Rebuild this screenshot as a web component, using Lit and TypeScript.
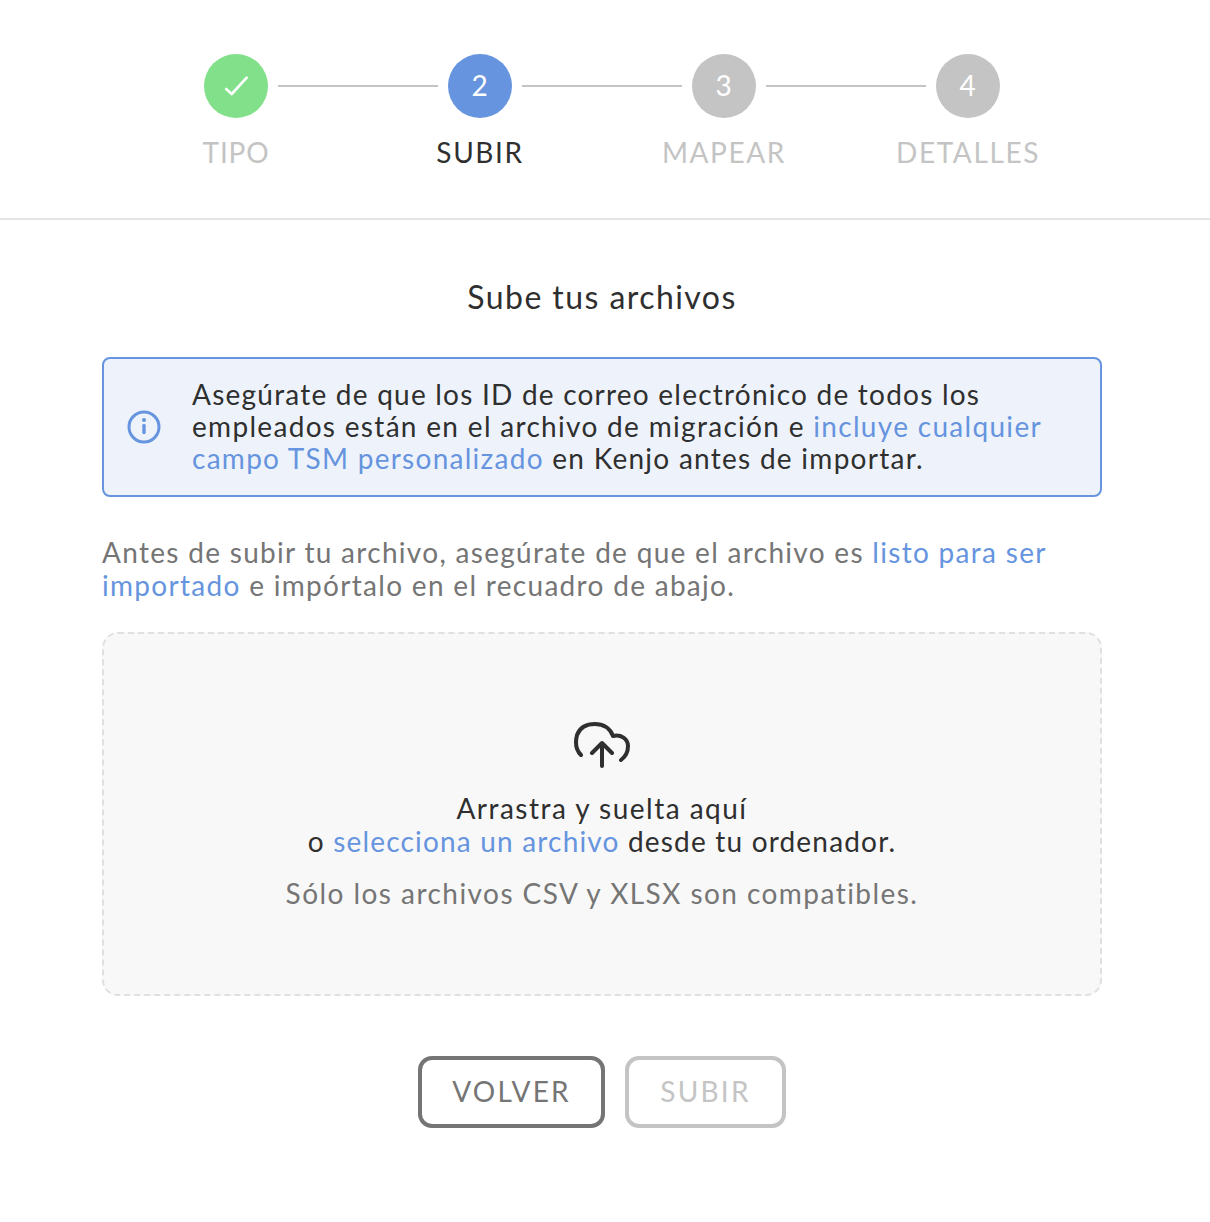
import { LitElement, html, css } from "lit";
import { customElement } from "lit/decorators.js";

@customElement("app-root")
export class AppRoot extends LitElement {
  static styles = css`
    :host { display: block; width: 1210px; height: 1222px; background: #fff; font-family: "Lato", "Noto Sans", sans-serif; color: #2f2f2f; overflow: hidden; }
    .stepper { display: flex; flex-direction: column; align-items: center; padding: 54px 6px 0 0; height: 164px; box-sizing: content-box; border-bottom: 2px solid #e4e4e4; }
    .track { display: flex; align-items: center; gap: 10px; }
    .circle { width: 64px; height: 64px; border-radius: 50%; background: #c4c4c4; color: #fff; display: flex; align-items: center; justify-content: center; font-size: 28px; padding: 0 1px 2px 0; box-sizing: border-box; }
    .circle.done { background: #82e08a; padding: 0; }
    .circle.active { background: #6694de; }
    .line { width: 160px; height: 2px; background: #c4c4c4; }
    .labels { display: grid; grid-template-columns: repeat(4, 244px); margin-top: 18px; }
    .label { text-align: center; font-size: 28px; line-height: 32px; letter-spacing: 1.6px; color: #c4c4c4; }
    .label.tipo { letter-spacing: 0.8px; }
    .label.active { color: #2f2f2f; }
    main { width: 1000px; margin: 0 auto; position: relative; left: -3px; display: flex; flex-direction: column; }
    h1 { margin: 59px 0 0; font-weight: 400; font-size: 32px; line-height: 36px; letter-spacing: 1.43px; text-align: center; }
    .alert { margin-top: 42px; height: 140px; box-sizing: border-box; border: 2px solid #6694de; border-radius: 8px; background: #eef3fb; display: flex; align-items: center; padding: 0 23px; gap: 31px; }
    .alert svg { flex: none; }
    .alert p { margin: 0 0 2px; font-size: 28px; line-height: 32px; letter-spacing: 1.22px; white-space: nowrap; }
    .wide { letter-spacing: 1.31px; }
    .mid { letter-spacing: 1.27px; }
    a { color: #6694de; text-decoration: none; }
    .intro { margin: 39px 0 0; font-size: 28px; line-height: 33px; letter-spacing: 1.3px; color: #757575; white-space: nowrap; }
    .drop { margin-top: 30px; height: 364px; box-sizing: border-box; border: 2px dashed #e0e0e0; border-radius: 16px; background: #f8f8f8; display: flex; flex-direction: column; align-items: center; padding-top: 87px; }
    .drop p { margin: 0; text-align: center; font-size: 28px; line-height: 33px; }
    .drop .l1 { margin-top: 23px; letter-spacing: 1.48px; }
    .l2 { letter-spacing: 1.18px; }
    .drop .hint { margin-top: 19px; color: #757575; letter-spacing: 1.45px; }
    .actions { display: flex; justify-content: center; gap: 20px; margin-top: 60px; }
    button { height: 72px; box-sizing: border-box; background: #fff; border-radius: 14px; border: 4px solid #757575; color: #757575; font: inherit; font-size: 28px; letter-spacing: 2.2px; padding: 0 0 2px; }
    .back { width: 187px; }
    .next { width: 161px; border-color: #c4c4c4; color: #c4c4c4; }
  `;

  render() {
    return html`
      <section class="stepper">
        <div class="track">
          <div class="circle done">
            <svg width="28" height="28" viewBox="0 0 28 28" fill="none" stroke="#fff" stroke-width="2.6" stroke-linecap="round" stroke-linejoin="round"><path d="M4.2 17 L9.7 22 L24.7 5.7" /></svg>
          </div>
          <div class="line"></div>
          <div class="circle active">2</div>
          <div class="line"></div>
          <div class="circle">3</div>
          <div class="line"></div>
          <div class="circle">4</div>
        </div>
        <div class="labels">
          <div class="label tipo">TIPO</div>
          <div class="label active">SUBIR</div>
          <div class="label">MAPEAR</div>
          <div class="label">DETALLES</div>
        </div>
      </section>
      <main>
        <h1>Sube tus archivos</h1>
        <div class="alert">
          <svg width="34" height="34" viewBox="0 0 34 34" fill="none" stroke="#6694de" stroke-width="3"><circle cx="17" cy="17" r="15" /><path d="M17 15.5 V22.5" stroke-width="3.4" stroke-linecap="round" /><circle cx="17" cy="10" r="2" fill="#6694de" stroke="none" /></svg>
          <p>Asegúrate de que los ID de correo electrónico de todos los<br /><span class="wide">empleados están en el archivo de migración e <a>incluye cualquier</a></span><br /><span class="mid"><a>campo TSM personalizado</a> en Kenjo antes de importar.</span></p>
        </div>
        <p class="intro">Antes de subir tu archivo, asegúrate de que el archivo es <a>listo para ser</a><br /><a>importado</a> e impórtalo en el recuadro de abajo.</p>
        <div class="drop">
          <svg width="56" height="48" viewBox="0 0 56 48" fill="none" stroke="#2f2f2f" stroke-width="4" stroke-linecap="round" stroke-linejoin="round"><path d="M7 34 C2 29 1 22 3 14 C6 6 13 3 21 3 C29 3 36 7 39 15 C47 13 54 18 54 25 C54 31 51 36 47 39" /><path d="M28 45 V22 M18 32 L28 22 L38 32" /></svg>
          <p class="l1">Arrastra y suelta aquí</p>
          <p class="l2">o <a>selecciona un archivo</a> desde tu ordenador.</p>
          <p class="hint">Sólo los archivos CSV y XLSX son compatibles.</p>
        </div>
        <div class="actions">
          <button class="back">VOLVER</button>
          <button class="next">SUBIR</button>
        </div>
      </main>
    `;
  }
}
